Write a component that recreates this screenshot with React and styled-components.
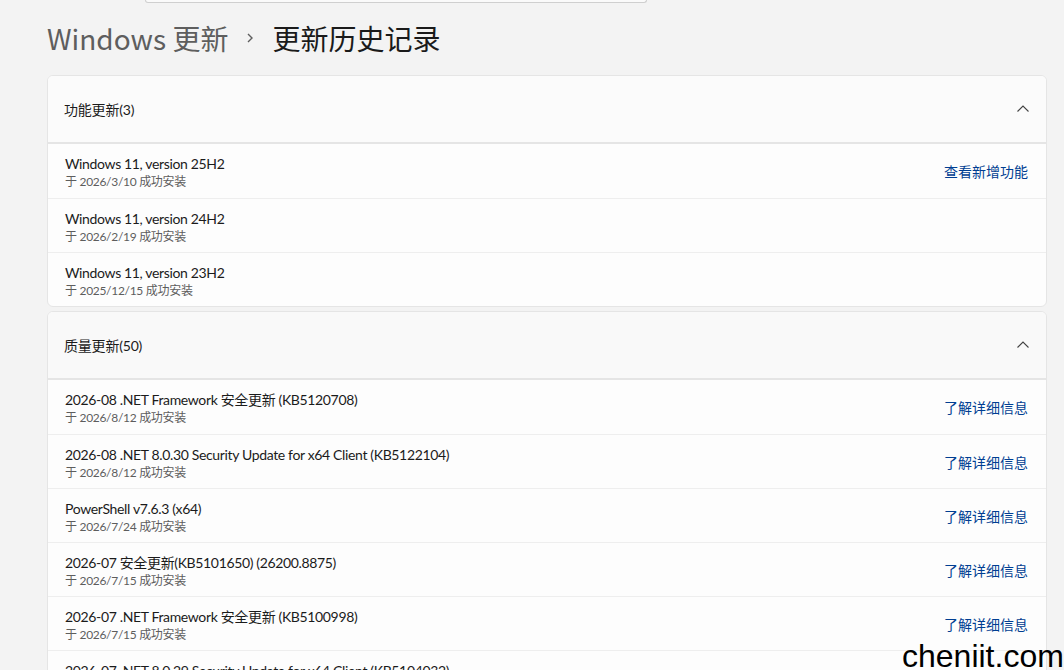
import React from "react";
import styled, { createGlobalStyle } from "styled-components";

const GlobalStyle = createGlobalStyle`
  html, body {
    margin: 0;
    padding: 0;
    background: #f3f3f3;
    overflow: hidden;
  }
  body {
    font-family: "Segoe UI", Lato, "Noto Sans CJK SC", sans-serif;
    color: #1b1b1b;
    -webkit-font-smoothing: antialiased;
  }
`;

const features = [
  { title: "Windows 11, version 25H2", date: "2026/3/10", link: "查看新增功能" },
  { title: "Windows 11, version 24H2", date: "2026/2/19" },
  { title: "Windows 11, version 23H2", date: "2025/12/15" },
];

const quality = [
  { title: "2026-08 .NET Framework 安全更新 (KB5120708)", date: "2026/8/12" },
  { title: "2026-08 .NET 8.0.30 Security Update for x64 Client (KB5122104)", date: "2026/8/12" },
  { title: "PowerShell v7.6.3 (x64)", date: "2026/7/24" },
  { title: "2026-07 安全更新(KB5101650) (26200.8875)", date: "2026/7/15" },
  { title: "2026-07 .NET Framework 安全更新 (KB5100998)", date: "2026/7/15" },
  { title: "2026-07 .NET 8.0.29 Security Update for x64 Client (KB5104032)", date: "2026/7/15" },
];

const Page = styled.div`
  height: 670px;
  overflow: hidden;
  position: relative;
`;

// bottom edge of the search box that has scrolled up out of view
const SearchEdge = styled.div`
  width: 500px;
  height: 2px;
  margin-left: 145px;
  border: 1px solid #cfcfcf;
  border-top: none;
  border-radius: 0 0 7px 7px;
  background: #fafafa;
`;

const Breadcrumb = styled.h1`
  display: flex;
  align-items: center;
  margin: 0;
  padding: 15px 0 0 47px;
  height: 54px;
  box-sizing: border-box;
  font-family: "Segoe UI", "Noto Sans CJK SC", sans-serif;
  font-size: 28px;
  font-weight: 400;
  line-height: 36px;
`;

const Crumb = styled.span`
  color: ${(p) => (p.$current ? "#1a1a1a" : "#5e5e5e")};
`;

const CrumbSep = styled.span`
  display: flex;
  align-items: center;
  width: 44px;
  justify-content: center;
`;

const List = styled.div`
  display: flex;
  flex-direction: column;
  gap: 4px;
  width: 1000px;
  margin: 18px 0 0 47px;
`;

const Expander = styled.section`
  border: 1px solid #e5e5e5;
  border-radius: 6px;
  overflow: hidden;
  background: #fdfdfd;
`;

const Header = styled.div`
  display: flex;
  align-items: center;
  justify-content: space-between;
  height: 66px;
  padding: 0 16px;
  background: ${(p) => (p.$hover ? "#f9f9f9" : "#fbfbfb")};
  border-bottom: 2px solid #e5e5e5;
  font-size: 14px;
  letter-spacing: -0.2px;
`;

const Row = styled.div`
  display: flex;
  align-items: center;
  justify-content: space-between;
  height: 54px;
  padding: 0 18px 0 17px;
  box-sizing: border-box;
  & + & {
    border-top: 1px solid #eeeeee;
  }
`;

const Info = styled.div`
  display: flex;
  flex-direction: column;
  padding-top: 2px;
`;

const Title = styled.div`
  font-size: 14px;
  line-height: 19px;
  letter-spacing: -0.35px;
  color: #1b1b1b;
`;

const Sub = styled.div`
  font-size: 12px;
  line-height: 17px;
  letter-spacing: -0.3px;
  color: #5d5d5d;
`;

const Link = styled.a`
  font-size: 14px;
  color: #003e92;
  text-decoration: none;
  cursor: pointer;
`;

const Watermark = styled.div`
  position: absolute;
  left: 902px;
  top: 638px;
  font-family: "Liberation Sans", Arial, sans-serif;
  font-size: 32px;
  line-height: 36px;
  color: #000;
  white-space: nowrap;
`;

const ChevronUp = () => (
  <svg width="14" height="14" viewBox="0 0 14 14">
    <path d="M1.5 9.5 L7 4 L12.5 9.5" fill="none" stroke="#454545" strokeWidth="1.1" />
  </svg>
);

const ChevronRight = () => (
  <svg width="10" height="12" viewBox="0 0 10 12">
    <path d="M3 2 L7 6 L3 10" fill="none" stroke="#5e5e5e" strokeWidth="1.4" />
  </svg>
);

const UpdateGroup = ({ label, items, link, hover }) => (
  <Expander>
    <Header $hover={hover}>
      <span>{label}</span>
      <ChevronUp />
    </Header>
    {items.map((it) => (
      <Row key={it.title}>
        <Info>
          <Title>{it.title}</Title>
          <Sub>于 {it.date} 成功安装</Sub>
        </Info>
        {(it.link || link) && <Link>{it.link || link}</Link>}
      </Row>
    ))}
  </Expander>
);

export default function App() {
  return (
    <>
      <GlobalStyle />
      <Page>
        <SearchEdge />
        <Breadcrumb>
          <Crumb>Windows 更新</Crumb>
          <CrumbSep>
            <ChevronRight />
          </CrumbSep>
          <Crumb $current>更新历史记录</Crumb>
        </Breadcrumb>
        <List>
          <UpdateGroup label="功能更新(3)" items={features} />
          <UpdateGroup label="质量更新(50)" items={quality} link="了解详细信息" hover />
        </List>
        <Watermark>cheniit.com</Watermark>
      </Page>
    </>
  );
}
